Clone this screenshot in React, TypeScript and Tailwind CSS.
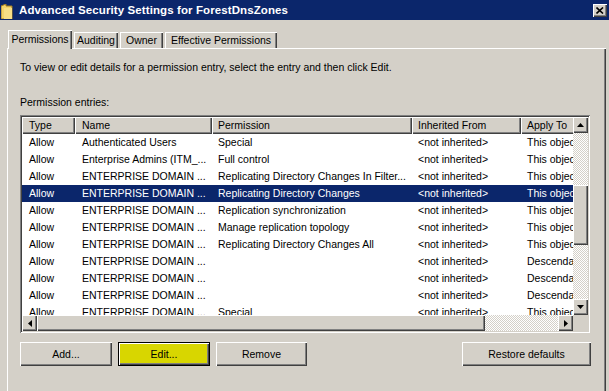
import React from 'react';

const raised = 'shadow-[inset_1px_1px_0_#ffffff,inset_-1px_-1px_0_#404040,inset_-2px_-2px_0_#808080]';
const dither = 'bg-[image:repeating-conic-gradient(#ffffff_0_25%,#d4d0c8_0_50%)] bg-[length:2px_2px]';

const rows = [
  ['Allow', 'Authenticated Users', 'Special', '<not inherited>', 'This object only'],
  ['Allow', 'Enterprise Admins (ITM_...', 'Full control', '<not inherited>', 'This object only'],
  ['Allow', 'ENTERPRISE DOMAIN ...', 'Replicating Directory Changes In Filter...', '<not inherited>', 'This object only'],
  ['Allow', 'ENTERPRISE DOMAIN ...', 'Replicating Directory Changes', '<not inherited>', 'This object only'],
  ['Allow', 'ENTERPRISE DOMAIN ...', 'Replication synchronization', '<not inherited>', 'This object only'],
  ['Allow', 'ENTERPRISE DOMAIN ...', 'Manage replication topology', '<not inherited>', 'This object only'],
  ['Allow', 'ENTERPRISE DOMAIN ...', 'Replicating Directory Changes All', '<not inherited>', 'This object only'],
  ['Allow', 'ENTERPRISE DOMAIN ...', '', '<not inherited>', 'Descendant objects'],
  ['Allow', 'ENTERPRISE DOMAIN ...', '', '<not inherited>', 'Descendant objects'],
  ['Allow', 'ENTERPRISE DOMAIN ...', '', '<not inherited>', 'Descendant objects'],
  ['Allow', 'ENTERPRISE DOMAIN ...', 'Special', '<not inherited>', 'This object only'],
];

const cols = ['w-[53px] pl-[7px]', 'w-[137px] pl-[7px]', 'w-[200px] pl-[6px]', 'w-[109px] pl-[6px]', 'w-[120px] pl-[6px]'];
const headers = ['Type', 'Name', 'Permission', 'Inherited From', 'Apply To'];

function Arrow({ dir }: { dir: 'up' | 'down' | 'left' | 'right' }) {
  const pts = {
    up: '0,4 7,4 3.5,0',
    down: '0,0 7,0 3.5,4',
    left: '4,0 4,7 0,3.5',
    right: '0,0 0,7 4,3.5',
  }[dir];
  const vertical = dir === 'up' || dir === 'down';
  return (
    <svg width={vertical ? 7 : 4} height={vertical ? 4 : 7} viewBox={vertical ? '0 0 7 4' : '0 0 4 7'}>
      <polygon points={pts} fill="#000" />
    </svg>
  );
}

function ScrollBtn({ dir, className }: { dir: 'up' | 'down' | 'left' | 'right'; className: string }) {
  return (
    <div className={`flex items-center justify-center bg-[#d4d0c8] ${raised} ${className}`}>
      <Arrow dir={dir} />
    </div>
  );
}

function Button({ label, width, highlight }: { label: string; width: string; highlight?: boolean }) {
  if (highlight) {
    return (
      <div className={`${width} h-[24px] border border-black`}>
        <div className={`w-full h-full flex items-center justify-center bg-[#d8d600] ${raised}`}>{label}</div>
      </div>
    );
  }
  return (
    <div className={`${width} h-[24px] flex items-center justify-center bg-[#d4d0c8] ${raised}`}>{label}</div>
  );
}

export default function App() {
  return (
    <div className="w-[609px] h-[391px] overflow-hidden bg-[#d4d0c8] flex flex-col font-['Liberation_Sans',Arial,sans-serif] text-[10.5px] leading-[13px] text-black">
      {/* Title bar */}
      <div className="h-[20px] shrink-0 bg-[#0b266b] flex items-center">
        <svg width="13" height="15" viewBox="0 0 13 15" className="ml-[1px] mt-[2px]">
          <path d="M0 2 L5 0 L5 2 L11 2 L11 15 L0 15 Z" fill="#f3d36a" stroke="#a07a20" strokeWidth="1" />
          <path d="M3 4 L11 4 L11 15 L3 15 Z" fill="#f7de86" />
        </svg>
        <span className="ml-[5px] text-white font-bold text-[11.5px] tracking-[0.1px]">Advanced Security Settings for ForestDnsZones</span>
        <div className={`ml-auto mr-[2px] w-[14px] h-[13px] flex items-center justify-center bg-[#d4d0c8] ${raised}`}>
          <svg width="8" height="7" viewBox="0 0 8 7">
            <path d="M0.5 0.5 L7 6.5 M7 0.5 L0.5 6.5" stroke="#000" strokeWidth="1.6" />
          </svg>
        </div>
      </div>

      {/* Tabs */}
      <div className="mt-[10px] h-[18px] shrink-0 flex items-end pl-[8px]">
        <div className={`relative z-10 w-[64px] h-[19px] -mb-[1px] flex items-start pt-[3px] justify-center bg-[#d4d0c8] shadow-[inset_1px_1px_0_#ffffff,inset_-1px_0_0_#404040,inset_-2px_0_0_#808080]`}>
          Permissions
        </div>
        <div className="ml-[2px] w-[44px] h-[16px] flex items-center justify-center shadow-[inset_1px_1px_0_#ffffff,inset_-1px_0_0_#404040,inset_-2px_0_0_#808080]">
          Auditing
        </div>
        <div className="ml-[2px] w-[43px] h-[16px] flex items-center justify-center shadow-[inset_1px_1px_0_#ffffff,inset_-1px_0_0_#404040,inset_-2px_0_0_#808080]">
          Owner
        </div>
        <div className="ml-[2px] w-[112px] h-[16px] flex items-center justify-center shadow-[inset_1px_1px_0_#ffffff,inset_-1px_0_0_#404040,inset_-2px_0_0_#808080]">
          Effective Permissions
        </div>
      </div>

      {/* Panel */}
      <div className="ml-[7px] w-[599px] flex-1 px-[13px] pt-[13px] shadow-[inset_1px_1px_0_#ffffff,inset_-1px_0_0_#404040,inset_-2px_0_0_#808080]">
        <p>To view or edit details for a permission entry, select the entry and then click Edit.</p>
        <p className="mt-[22px]">Permission entries:</p>

        {/* List view */}
        <div className="mt-[6px] w-[570px] h-[218px] p-[2px] bg-white shadow-[inset_1px_1px_0_#808080,inset_-1px_-1px_0_#ffffff,inset_2px_2px_0_#404040,inset_-2px_-2px_0_#d4d0c8]">
          <div className="flex h-[198px]">
            <div className="w-[551px] overflow-hidden">
              <div className="w-[619px]">
                <div className="flex h-[17px]">
                  {headers.map((h, i) => (
                    <div key={h} className={`${cols[i]} shrink-0 h-full flex items-center bg-[#d4d0c8] whitespace-nowrap ${raised}`}>
                      {h}
                    </div>
                  ))}
                </div>
                {rows.map((r, ri) => {
                  const sel = ri === 3;
                  return (
                    <div key={ri} className={`flex h-[17px] items-center ${sel ? 'bg-[#0b266b] text-white' : ''}`}>
                      {r.map((c, ci) => (
                        <div key={ci} className={`${cols[ci]} shrink-0 whitespace-nowrap overflow-hidden`}>
                          {c}
                        </div>
                      ))}
                    </div>
                  );
                })}
              </div>
            </div>
            {/* Vertical scrollbar */}
            <div className={`w-[15px] flex flex-col ${dither}`}>
              <ScrollBtn dir="up" className="h-[16px] shrink-0" />
              <div className="h-[52px] shrink-0" />
              <div className={`h-[60px] shrink-0 bg-[#d4d0c8] ${raised}`} />
              <div className="flex-1" />
              <ScrollBtn dir="down" className="h-[16px] shrink-0" />
            </div>
          </div>
          {/* Horizontal scrollbar */}
          <div className="flex h-[16px]">
            <ScrollBtn dir="left" className="w-[15px] shrink-0" />
            <div className={`w-[448px] shrink-0 bg-[#d4d0c8] ${raised}`} />
            <div className={`flex-1 ${dither}`} />
            <ScrollBtn dir="right" className="w-[15px] shrink-0" />
            <div className="w-[15px] shrink-0 bg-[#d4d0c8]" />
          </div>
        </div>

        {/* Buttons */}
        <div className="mt-[9px] w-[571px] flex">
          <Button label="Add..." width="w-[92px]" />
          <div className="ml-[6px]">
            <Button label="Edit..." width="w-[92px]" highlight />
          </div>
          <div className="ml-[6px]">
            <Button label="Remove" width="w-[91px]" />
          </div>
          <div className="ml-auto">
            <Button label="Restore defaults" width="w-[129px]" />
          </div>
        </div>
      </div>
    </div>
  );
}
